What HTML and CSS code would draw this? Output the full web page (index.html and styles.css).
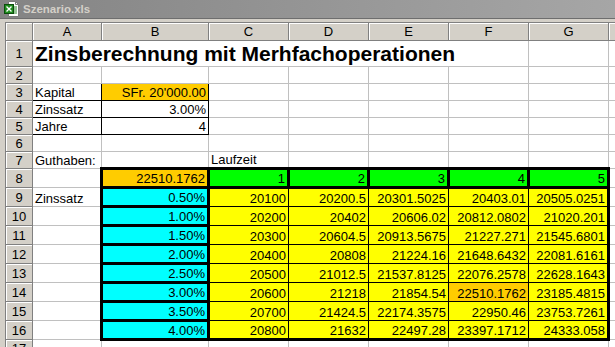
FILE: index.html
```html
<!DOCTYPE html>
<html lang="de">
<head>
  <meta charset="UTF-8">
  <title>Szenario.xls</title>
  <link rel="stylesheet" href="styles.css">
</head>
<body>
  <div class="window">
    <div class="titlebar">
      <svg class="xls-icon" width="16" height="16" viewBox="0 0 16 16">
        <path d="M4.5 0.5h7l3 3v12h-10z" fill="#fff" stroke="#7a7a7a"/>
        <path d="M11.5 0.5v3h3" fill="none" stroke="#7a7a7a"/>
        <path d="M10 6h3M10 8h3M10 10h3M10 12h3" stroke="#2e8b2e"/>
        <rect x="0.5" y="3.5" width="9" height="9" fill="#1e8c1e" stroke="#0b4d0b"/>
        <path d="M2.5 5.5l5 5M7.5 5.5l-5 5" stroke="#fff" stroke-width="1.4"/>
      </svg>
      <span class="title-text">Szenario.xls</span>
    </div>
    <div class="frame">
      <table class="sheet">
        <colgroup>
          <col class="c-hdr">
          <col class="c-a">
          <col class="c-b">
          <col class="c-n"><col class="c-n"><col class="c-n"><col class="c-n"><col class="c-n"><col class="c-n">
        </colgroup>
        <tr class="r-head">
          <th></th><th>A</th><th>B</th><th>C</th><th>D</th><th>E</th><th>F</th><th>G</th><th></th>
        </tr>
        <tr class="r-big">
          <th>1</th><td class="heading" colspan="6">Zinsberechnung mit Merhfachoperationen</td><td></td><td></td>
        </tr>
        <tr class="r-std">
          <th>2</th><td></td><td></td><td></td><td></td><td></td><td></td><td></td><td></td>
        </tr>
        <tr class="r-std">
          <th>3</th><td class="box">Kapital</td><td class="box gold num">SFr. 20'000.00</td><td></td><td></td><td></td><td></td><td></td><td></td>
        </tr>
        <tr class="r-std">
          <th>4</th><td class="box">Zinssatz</td><td class="box num">3.00%</td><td></td><td></td><td></td><td></td><td></td><td></td>
        </tr>
        <tr class="r-std">
          <th>5</th><td class="box">Jahre</td><td class="box num">4</td><td></td><td></td><td></td><td></td><td></td><td></td>
        </tr>
        <tr class="r-std">
          <th>6</th><td></td><td></td><td></td><td></td><td></td><td></td><td></td><td></td>
        </tr>
        <tr class="r-std">
          <th>7</th><td>Guthaben:</td><td></td><td>Laufzeit</td><td></td><td></td><td></td><td></td><td></td>
        </tr>
        <tr class="r-tab">
          <th>8</th><td></td><td class="thick gold num">22510.1762</td>
          <td class="thick green num">1</td><td class="thick green num">2</td><td class="thick green num">3</td><td class="thick green num">4</td><td class="thick green num">5</td><td></td>
        </tr>
        <tr class="r-tab">
          <th>9</th><td>Zinssatz</td><td class="thick cyan num">0.50%</td>
          <td class="yel num">20100</td><td class="yel num">20200.5</td><td class="yel num">20301.5025</td><td class="yel num">20403.01</td><td class="yel last num">20505.0251</td><td></td>
        </tr>
        <tr class="r-tab">
          <th>10</th><td></td><td class="thick cyan num">1.00%</td>
          <td class="yel num">20200</td><td class="yel num">20402</td><td class="yel num">20606.02</td><td class="yel num">20812.0802</td><td class="yel last num">21020.201</td><td></td>
        </tr>
        <tr class="r-tab">
          <th>11</th><td></td><td class="thick cyan num">1.50%</td>
          <td class="yel num">20300</td><td class="yel num">20604.5</td><td class="yel num">20913.5675</td><td class="yel num">21227.271</td><td class="yel last num">21545.6801</td><td></td>
        </tr>
        <tr class="r-tab">
          <th>12</th><td></td><td class="thick cyan num">2.00%</td>
          <td class="yel num">20400</td><td class="yel num">20808</td><td class="yel num">21224.16</td><td class="yel num">21648.6432</td><td class="yel last num">22081.6161</td><td></td>
        </tr>
        <tr class="r-tab">
          <th>13</th><td></td><td class="thick cyan num">2.50%</td>
          <td class="yel num">20500</td><td class="yel num">21012.5</td><td class="yel num">21537.8125</td><td class="yel num">22076.2578</td><td class="yel last num">22628.1643</td><td></td>
        </tr>
        <tr class="r-tab">
          <th>14</th><td></td><td class="thick cyan num">3.00%</td>
          <td class="yel num">20600</td><td class="yel num">21218</td><td class="yel num">21854.54</td><td class="yel hit num">22510.1762</td><td class="yel last num">23185.4815</td><td></td>
        </tr>
        <tr class="r-tab">
          <th>15</th><td></td><td class="thick cyan num">3.50%</td>
          <td class="yel num">20700</td><td class="yel num">21424.5</td><td class="yel num">22174.3575</td><td class="yel num">22950.46</td><td class="yel last num">23753.7261</td><td></td>
        </tr>
        <tr class="r-tab">
          <th>16</th><td></td><td class="thick cyan num">4.00%</td>
          <td class="yel bottom num">20800</td><td class="yel bottom num">21632</td><td class="yel bottom num">22497.28</td><td class="yel bottom num">23397.1712</td><td class="yel bottom last num">24333.058</td><td></td>
        </tr>
        <tr class="r-std">
          <th>17</th><td></td><td></td><td></td><td></td><td></td><td></td><td></td><td></td>
        </tr>
      </table>
    </div>
  </div>
</body>
</html>
```

FILE: styles.css
```css
html,
body {
  margin: 0;
  width: 615px;
  height: 347px;
  overflow: hidden;
}

.window {
  width: 615px;
  height: 347px;
  background: #d4d0c8;
  overflow: hidden;
}

.titlebar {
  height: 19px;
  display: flex;
  align-items: center;
  gap: 3px;
  padding-left: 4px;
  background: linear-gradient(to right, #848484, #a6a6a6);
  border-bottom: 1px solid #6e6e6e;
  box-sizing: border-box;
}

.titlebar .title-text {
  color: #d4d0c8;
  font: bold 11.5px "Liberation Sans", Arial, sans-serif;
}

.frame {
  padding: 3px 0 0 5px;
}

.sheet {
  border-collapse: collapse;
  table-layout: fixed;
  width: 684px;
  background: #fff;
  font: 13px "Liberation Sans", Arial, sans-serif;
  color: #000;
}

.sheet .c-hdr { width: 27px; }
.sheet .c-a { width: 69px; }
.sheet .c-b { width: 107px; }
.sheet .c-n { width: 80px; }

.sheet th {
  background: #d4d0c8;
  border: 1px solid #808080;
  box-shadow: inset 1px 1px 0 #fff;
  font-weight: normal;
  text-align: center;
  vertical-align: middle;
  padding: 0;
  line-height: 15px;
}

.sheet td {
  border: 1px solid #c0c0c0;
  padding: 0 2px;
  line-height: 15px;
  vertical-align: bottom;
  white-space: nowrap;
  overflow: hidden;
}

.r-head { height: 18px; }
.r-big { height: 26px; }
.r-std { height: 17px; }
.r-tab { height: 19px; }

.sheet td.heading {
  font-size: 21px;
  font-weight: bold;
  line-height: 24px;
  overflow: visible;
}

.sheet .num { text-align: right; }

.sheet td.box { border: 1px solid #000; }

.sheet td.thick { border: 3px solid #000; }

.sheet td.yel {
  background: #ffff00;
  border: 1px solid #000;
}

.sheet td.last { border-right: 3px solid #000; }
.sheet td.bottom { border-bottom: 3px solid #000; }

.gold { background: #ffcc00; }
.sheet td.hit { background: #ffcc00; }
.cyan { background: #00ffff; }
.green { background: #00ff00; }
```
